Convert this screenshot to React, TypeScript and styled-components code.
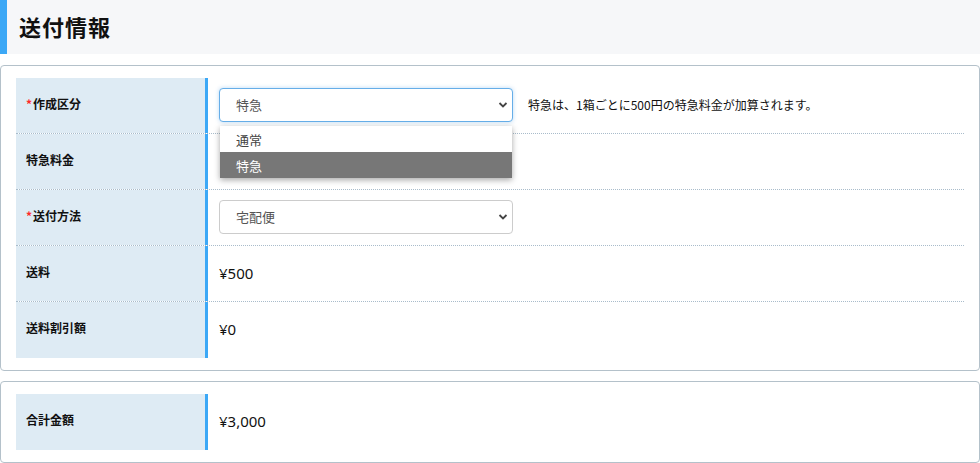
import React from "react";
import styled, { createGlobalStyle } from "styled-components";

const GlobalStyle = createGlobalStyle`
  html, body {
    margin: 0;
    padding: 0;
    background: #ffffff;
    font-family: "Noto Sans CJK JP", "Noto Sans", "Liberation Sans", sans-serif;
    color: #111111;
  }
`;

const Page = styled.div`
  display: flex;
  flex-direction: column;
  width: 980px;
`;

const Header = styled.div`
  height: 54px;
  box-sizing: border-box;
  display: flex;
  align-items: center;
  padding: 0 0 3px 12px;
  background: #f6f7f9;
  border-left: 7px solid #3ca8f6;
  margin-bottom: 11px;
`;

const Title = styled.h1`
  margin: 0;
  font-size: 22px;
  font-weight: 700;
  letter-spacing: 1px;
  color: #111111;
`;

const Card = styled.div<{ $gap?: number }>`
  box-sizing: border-box;
  border: 1px solid #b4c1ca;
  border-radius: 4px;
  padding: 12px 15px;
  margin-bottom: ${(p) => p.$gap ?? 0}px;
`;

const Row = styled.div<{ $last?: boolean }>`
  display: grid;
  grid-template-columns: 192px 1fr;
  height: 56px;
  box-sizing: border-box;
  border-bottom: ${(p) => (p.$last ? "none" : "1px dotted #a9bccb")};
`;

const Label = styled.div`
  display: flex;
  align-items: center;
  padding: 0 0 5px 10px;
  background: #deebf4;
  border-right: 3px solid #3ca8f6;
  font-size: 12px;
  font-weight: 700;
  color: #111111;
`;

const Required = styled.span`
  color: #ff2a2a;
  font-size: 12px;
  font-weight: 700;
  margin-right: 1px;
`;

const Value = styled.div`
  position: relative;
  display: flex;
  align-items: center;
  padding: 0 0 2px 11px;
  font-family: "Noto Sans", "Noto Sans CJK JP", sans-serif;
  font-size: 15px;
  color: #111111;
`;

const SelectWrap = styled.div`
  position: relative;
  width: 294px;
  height: 34px;
`;

const Select = styled.select<{ $focus?: boolean }>`
  appearance: none;
  -webkit-appearance: none;
  width: 100%;
  height: 100%;
  box-sizing: border-box;
  padding: 0 28px 0 16px;
  font-family: "Noto Sans CJK JP", sans-serif;
  font-size: 13px;
  color: #555555;
  background: #ffffff;
  border-radius: 4px;
  outline: none;
  border: 1px solid ${(p) => (p.$focus ? "#66aee8" : "#cccccc")};
  box-shadow: ${(p) => (p.$focus ? "0 0 4px rgba(102, 174, 232, 0.45)" : "none")};
`;

const Chevron = styled.svg`
  position: absolute;
  right: 5px;
  top: 13px;
  width: 10px;
  height: 8px;
  pointer-events: none;
`;

const Note = styled.span`
  margin-left: 15px;
  font-family: "Noto Sans CJK JP", sans-serif;
  font-size: 12px;
  color: #111111;
`;

const Dropdown = styled.ul`
  position: absolute;
  left: 12px;
  top: 48px;
  width: 292px;
  margin: 0;
  padding: 0;
  list-style: none;
  background: #ffffff;
  box-shadow: 0 2px 6px rgba(0, 0, 0, 0.35);
  z-index: 5;
`;

const Option = styled.li<{ $selected?: boolean }>`
  height: 26px;
  display: flex;
  align-items: center;
  padding-left: 16px;
  font-family: "Noto Sans CJK JP", sans-serif;
  font-size: 13px;
  color: ${(p) => (p.$selected ? "#ffffff" : "#444444")};
  background: ${(p) => (p.$selected ? "#777777" : "#ffffff")};
`;

const Arrow = () => (
  <Chevron viewBox="0 0 10 8">
    <path d="M1.5 2 L5 5.5 L8.5 2" fill="none" stroke="#444" strokeWidth="1.8" />
  </Chevron>
);

export default function App() {
  return (
    <>
      <GlobalStyle />
      <Page>
        <Header>
          <Title>送付情報</Title>
        </Header>
        <Card $gap={10}>
          <Row>
            <Label>
              <Required>*</Required>作成区分
            </Label>
            <Value>
              <SelectWrap>
                <Select $focus defaultValue="express">
                  <option value="normal">通常</option>
                  <option value="express">特急</option>
                </Select>
                <Arrow />
              </SelectWrap>
              <Note>特急は、1箱ごとに500円の特急料金が加算されます。</Note>
              <Dropdown>
                <Option>通常</Option>
                <Option $selected>特急</Option>
              </Dropdown>
            </Value>
          </Row>
          <Row>
            <Label>特急料金</Label>
            <Value />
          </Row>
          <Row>
            <Label>
              <Required>*</Required>送付方法
            </Label>
            <Value>
              <SelectWrap>
                <Select defaultValue="takuhai">
                  <option value="takuhai">宅配便</option>
                </Select>
                <Arrow />
              </SelectWrap>
            </Value>
          </Row>
          <Row>
            <Label>送料</Label>
            <Value>¥500</Value>
          </Row>
          <Row $last>
            <Label>送料割引額</Label>
            <Value>¥0</Value>
          </Row>
        </Card>
        <Card>
          <Row $last>
            <Label>合計金額</Label>
            <Value>¥3,000</Value>
          </Row>
        </Card>
      </Page>
    </>
  );
}
